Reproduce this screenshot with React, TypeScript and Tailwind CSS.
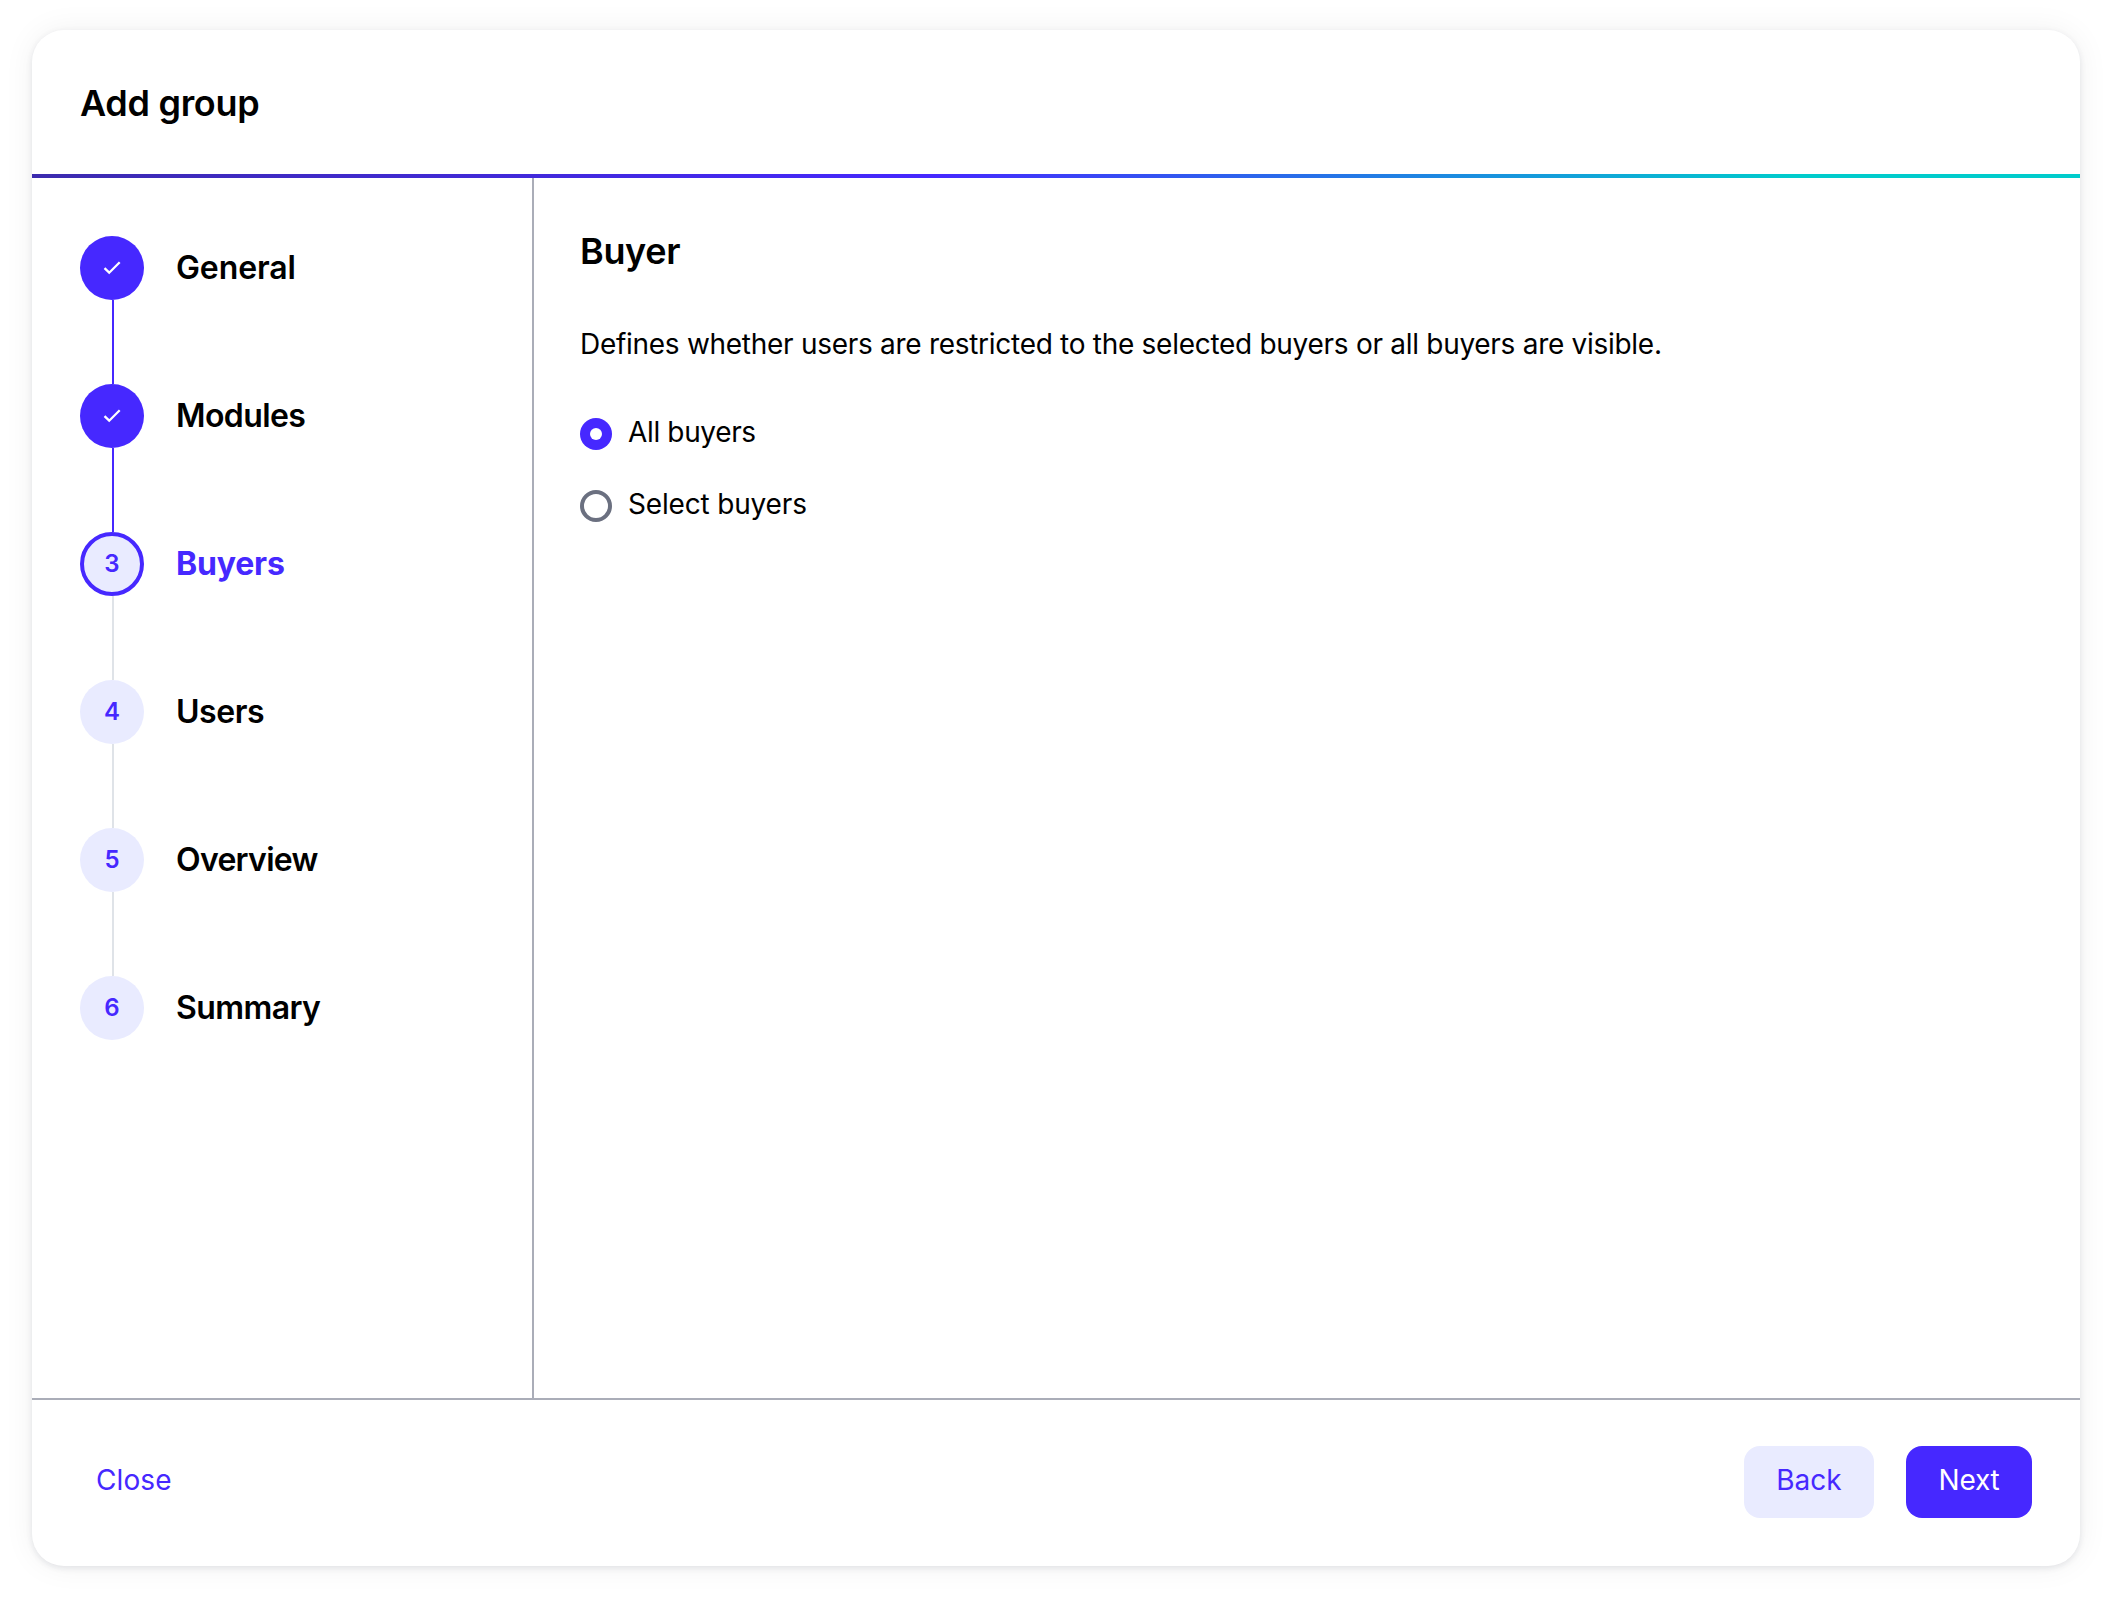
import clsx from "clsx";

type Status = "done" | "active" | "upcoming";

type Step = {
  label: string;
  status: Status;
  tracking: string;
};

const steps: Step[] = [
  { label: "General", status: "done", tracking: "tracking-[-0.1px]" },
  { label: "Modules", status: "done", tracking: "tracking-[-0.6px]" },
  { label: "Buyers", status: "active", tracking: "tracking-[-0.2px]" },
  { label: "Users", status: "upcoming", tracking: "tracking-[-0.45px]" },
  { label: "Overview", status: "upcoming", tracking: "tracking-[-0.7px]" },
  { label: "Summary", status: "upcoming", tracking: "tracking-[-0.6px]" },
];

function CheckIcon() {
  return (
    <svg viewBox="0 0 24 24" className="size-6" fill="none" aria-hidden="true">
      <path d="M4.5 12.2 9.2 16.7 19.7 6.3" stroke="currentColor" strokeWidth="2.3" />
    </svg>
  );
}

function StepItem({ step, index }: { step: Step; index: number }) {
  const isLast = index === steps.length - 1;
  return (
    <li className="flex gap-8">
      <div className="flex w-16 flex-col items-center">
        <span
          className={clsx(
            "flex size-16 shrink-0 items-center justify-center rounded-full text-2xl font-semibold",
            step.status === "done" && "bg-[#4628ff] text-white",
            step.status === "active" && "border-4 border-[#4628ff] bg-[#e9ebff] text-[#4628ff]",
            step.status === "upcoming" && "bg-[#e9ebff] text-[#4628ff]",
          )}
        >
          {step.status === "done" ? <CheckIcon /> : index + 1}
        </span>
        {!isLast && (
          <span
            className={clsx(
              "ml-0.5 h-21 w-0.5",
              step.status === "done" ? "bg-[#4628ff]" : "bg-[#dfe3e8]",
            )}
          />
        )}
      </div>
      <span
        className={clsx(
          "h-16 text-[32px] leading-[63px]",
          step.tracking,
          step.status === "active" ? "font-bold text-[#4628ff]" : "font-semibold text-black",
        )}
      >
        {step.label}
      </span>
    </li>
  );
}

function RadioOption({
  label,
  checked = false,
  tracking,
}: {
  label: string;
  checked?: boolean;
  tracking: string;
}) {
  return (
    <label className="flex h-10 items-start gap-4">
      <span
        className={clsx(
          "mt-1 flex size-8 shrink-0 items-center justify-center rounded-full",
          checked ? "bg-[#4628ff]" : "border-4 border-[#6b7080] bg-white",
        )}
      >
        {checked && <span className="size-3 rounded-full bg-white" />}
      </span>
      <span className={clsx("text-[28px] leading-9", tracking)}>{label}</span>
    </label>
  );
}

export default function App() {
  return (
    <div className="h-[1600px] w-[2112px] overflow-hidden bg-white px-8 pt-[30px] font-['Inter','Liberation_Sans',sans-serif] text-black">
      <section className="flex h-[1536px] flex-col overflow-hidden rounded-[32px] bg-white shadow-[0_2px_6px_rgba(20,26,60,0.10),0_0_32px_rgba(0,0,0,0.06)]">
        <header className="flex h-36 shrink-0 items-center px-12 pt-0.5">
          <h1 className="text-4xl font-semibold tracking-[-0.3px]">Add group</h1>
        </header>
        <div className="h-1 shrink-0 bg-[linear-gradient(90deg,#3c2bae_0%,#4628ff_44%,#00cccc_86%)]" />

        <div className="flex min-h-0 grow">
          <nav className="w-[502px] shrink-0 border-r-2 border-[#aaadb8] px-12 pt-[58px]">
            <ol>
              {steps.map((step, index) => (
                <StepItem key={step.label} step={step} index={index} />
              ))}
            </ol>
          </nav>

          <main className="grow px-[46px] pt-[49px]">
            <h2 className="text-4xl leading-12 font-semibold tracking-[-0.35px]">Buyer</h2>
            <p className="mt-[49px] text-[28px] leading-10 tracking-[-0.284px]">
              Defines whether users are restricted to the selected buyers or all buyers are visible.
            </p>
            <div className="mt-[50px] flex flex-col gap-8">
              <RadioOption label="All buyers" checked tracking="tracking-[-0.35px]" />
              <RadioOption label="Select buyers" tracking="tracking-[-0.17px]" />
            </div>
          </main>
        </div>

        <footer className="flex h-42 shrink-0 items-start justify-between border-t-2 border-[#aaadb8] px-12 pt-[46px] text-[28px]">
          <button className="h-18 px-4 pb-1 tracking-[0.1px] text-[#4628ff]">Close</button>
          <div className="flex gap-8">
            <button className="h-18 w-[130px] rounded-2xl bg-[#e9ebff] pb-1 text-[#4628ff]">
              Back
            </button>
            <button className="h-18 w-[126px] rounded-2xl bg-[#4628ff] pb-1 tracking-[-0.2px] text-white">
              Next
            </button>
          </div>
        </footer>
      </section>
    </div>
  );
}
